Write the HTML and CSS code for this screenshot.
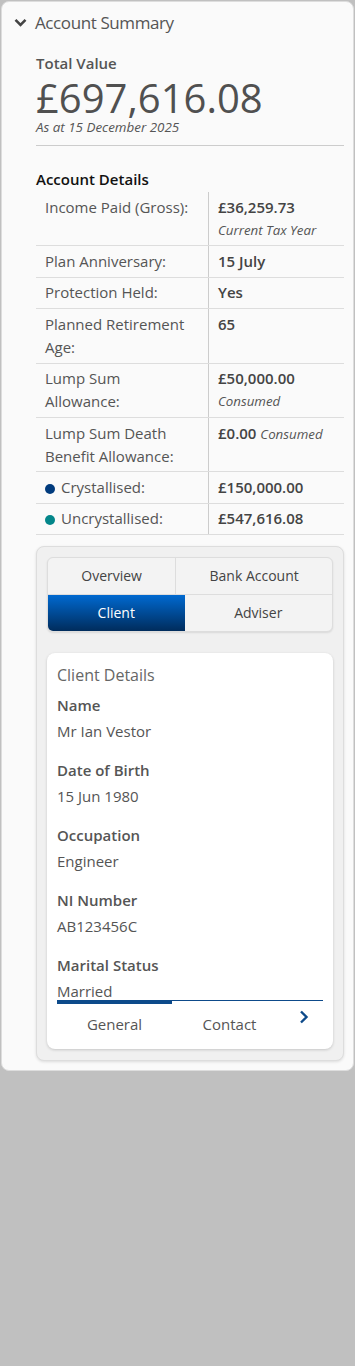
FILE: index.html
```html
<!DOCTYPE html>
<html lang="en">
<head>
    <meta charset="UTF-8">
    <meta name="viewport" content="width=device-width, initial-scale=1.0">
    <title>Account Summary</title>
    <link rel="stylesheet" href="styles.css">
</head>
<body>
    <div class="panel">
        <div class="panel-head">
            <svg class="chevron-down" width="13" height="9" viewBox="0 0 13 9">
                <path d="M1.5 1.8 L6.5 6.8 L11.5 1.8" fill="none" stroke="#444" stroke-width="2.6"/>
            </svg>
            <span>Account Summary</span>
        </div>

        <div class="panel-body">
            <div class="total-label">Total Value</div>
            <div class="total-value">£697,616.08</div>
            <div class="total-date">As at 15 December 2025</div>

            <h3 class="section-title">Account Details</h3>

            <div class="details">
                <div class="detail-row">
                    <div class="detail-label">Income Paid (Gross):</div>
                    <div class="detail-value">£36,259.73<span class="note block">Current Tax Year</span></div>
                </div>
                <div class="detail-row">
                    <div class="detail-label">Plan Anniversary:</div>
                    <div class="detail-value">15 July</div>
                </div>
                <div class="detail-row">
                    <div class="detail-label">Protection Held:</div>
                    <div class="detail-value">Yes</div>
                </div>
                <div class="detail-row">
                    <div class="detail-label">Planned Retirement Age:</div>
                    <div class="detail-value">65</div>
                </div>
                <div class="detail-row">
                    <div class="detail-label">Lump Sum Allowance:</div>
                    <div class="detail-value">£50,000.00<span class="note block">Consumed</span></div>
                </div>
                <div class="detail-row">
                    <div class="detail-label">Lump Sum Death Benefit Allowance:</div>
                    <div class="detail-value">£0.00 <span class="note">Consumed</span></div>
                </div>
                <div class="detail-row">
                    <div class="detail-label"><span class="dot dot-crys"></span>Crystallised:</div>
                    <div class="detail-value">£150,000.00</div>
                </div>
                <div class="detail-row">
                    <div class="detail-label"><span class="dot dot-uncrys"></span>Uncrystallised:</div>
                    <div class="detail-value">£547,616.08</div>
                </div>
            </div>

            <div class="tabs-box">
                <div class="tab-group">
                    <div class="tab-row">
                        <div class="tab">Overview</div>
                        <div class="tab">Bank Account</div>
                    </div>
                    <div class="tab-row">
                        <div class="tab active">Client</div>
                        <div class="tab">Adviser</div>
                    </div>
                </div>

                <div class="client-card">
                    <div class="card-title">Client Details</div>

                    <div class="field">
                        <div class="field-label">Name</div>
                        <div class="field-value">Mr Ian Vestor</div>
                    </div>
                    <div class="field">
                        <div class="field-label">Date of Birth</div>
                        <div class="field-value">15 Jun 1980</div>
                    </div>
                    <div class="field">
                        <div class="field-label">Occupation</div>
                        <div class="field-value">Engineer</div>
                    </div>
                    <div class="field">
                        <div class="field-label">NI Number</div>
                        <div class="field-value">AB123456C</div>
                    </div>
                    <div class="field">
                        <div class="field-label">Marital Status</div>
                        <div class="field-value">Married</div>
                    </div>

                    <div class="sub-tabs">
                        <div class="sub-tab current">General</div>
                        <div class="sub-tab">Contact</div>
                        <div class="sub-next">
                            <svg width="10" height="14" viewBox="0 0 10 14">
                                <path d="M2 1.5 L7.5 7 L2 12.5" fill="none" stroke="#0d4a8a" stroke-width="2.4"/>
                            </svg>
                        </div>
                    </div>
                </div>
            </div>
        </div>
    </div>
</body>
</html>
```

FILE: styles.css
```css
body {
    margin: 0;
    background-color: #c0c0c0;
    font-family: "Open Sans", Arial, sans-serif;
    color: #555;
}

.panel {
    margin: 1px 1px 0;
    background-color: #fafafa;
    border: 1px solid #ddd;
    border-radius: 8px;
    padding-bottom: 9px;
}

.panel-head {
    display: flex;
    align-items: center;
    padding: 9px 14px 0 12px;
    font-size: 17px;
    letter-spacing: -0.4px;
    line-height: 24px;
    color: #555;
}

.chevron-down {
    margin-right: 8px;
    margin-top: -1px;
}

.panel-body {
    padding: 0 9px 0 34px;
}

.total-label {
    margin-top: 18px;
    font-size: 15px;
    line-height: 20px;
    font-weight: 600;
    color: #555;
}

.total-value {
    margin-top: 4px;
    font-size: 40px;
    line-height: 42px;
    color: #505050;
}

.total-date {
    font-size: 13.4px;
    line-height: 16px;
    font-style: italic;
    color: #555;
    padding-bottom: 10px;
    border-bottom: 1px solid #ccc;
}

.section-title {
    margin: 23px 0 3px;
    font-size: 15px;
    line-height: 20px;
    font-weight: 600;
    color: #111;
}

.detail-row {
    display: grid;
    grid-template-columns: 173px 1fr;
    border-bottom: 1px solid #ddd;
    font-size: 15px;
    line-height: 23px;
}

.detail-label {
    padding: 3.7px 14px 3.7px 9px;
    border-right: 1px solid #ccc;
    color: #555;
}

.detail-value {
    padding: 3.7px 9px;
    font-weight: 600;
    color: #444;
}

.note {
    font-size: 13.3px;
    font-style: italic;
    font-weight: 400;
    color: #555;
}

.note.block {
    display: block;
}

.dot {
    display: inline-block;
    width: 10px;
    height: 10px;
    border-radius: 50%;
    margin-right: 6px;
    vertical-align: -1px;
}

.dot-crys {
    background-color: #003b7d;
}

.dot-uncrys {
    background-color: #03868a;
}

.tabs-box {
    margin-top: 11px;
    background-color: #f0f0f0;
    border: 1px solid #ddd;
    border-radius: 8px;
    box-shadow: 0 1px 3px rgba(0,0,0,0.12);
    padding: 10px 10px 11px;
}

.tab-group {
    border: 1px solid #ddd;
    border-radius: 6px;
    overflow: hidden;
    background-color: #f3f3f3;
    box-shadow: 0 1px 2px rgba(0,0,0,0.1);
}

.tab-row {
    display: flex;
}

.tab-row:first-child {
    border-bottom: 1px solid #ddd;
}

.tab {
    flex: 1 1 auto;
    text-align: center;
    height: 36px;
    line-height: 36px;
    font-size: 14px;
    font-weight: 500;
    color: #444;
}

.tab-row:first-child .tab + .tab {
    border-left: 1px solid #ddd;
}

.tab.active {
    background: linear-gradient(#0069d0, #002c5c);
    color: white;
}

.client-card {
    margin-top: 21px;
    background-color: white;
    border-radius: 8px;
    box-shadow: 0 1px 3px rgba(0,0,0,0.18);
    padding: 11px 10px 0;
}

.card-title {
    font-size: 16px;
    line-height: 22px;
    color: #666;
}

.field {
    margin-top: 9px;
}

.field + .field {
    margin-top: 19px;
}

.field-label {
    font-size: 15px;
    line-height: 20px;
    font-weight: 600;
    color: #555;
}

.field-value {
    margin-top: 6px;
    font-size: 15px;
    line-height: 20px;
    color: #555;
}

.sub-tabs {
    display: flex;
    border-top: 1px solid #0d4a8a;
    margin-top: -1px;
}

.sub-tab {
    width: 115px;
    text-align: center;
    padding: 10px 0 15px;
    border-top: 3px solid transparent;
    font-size: 15px;
    line-height: 20px;
    color: #555;
}

.sub-tab.current {
    border-top-color: #0d4a8a;
}

.sub-next {
    flex: 1;
    display: flex;
    justify-content: center;
    padding-top: 9px;
    padding-right: 3px;
}
```
